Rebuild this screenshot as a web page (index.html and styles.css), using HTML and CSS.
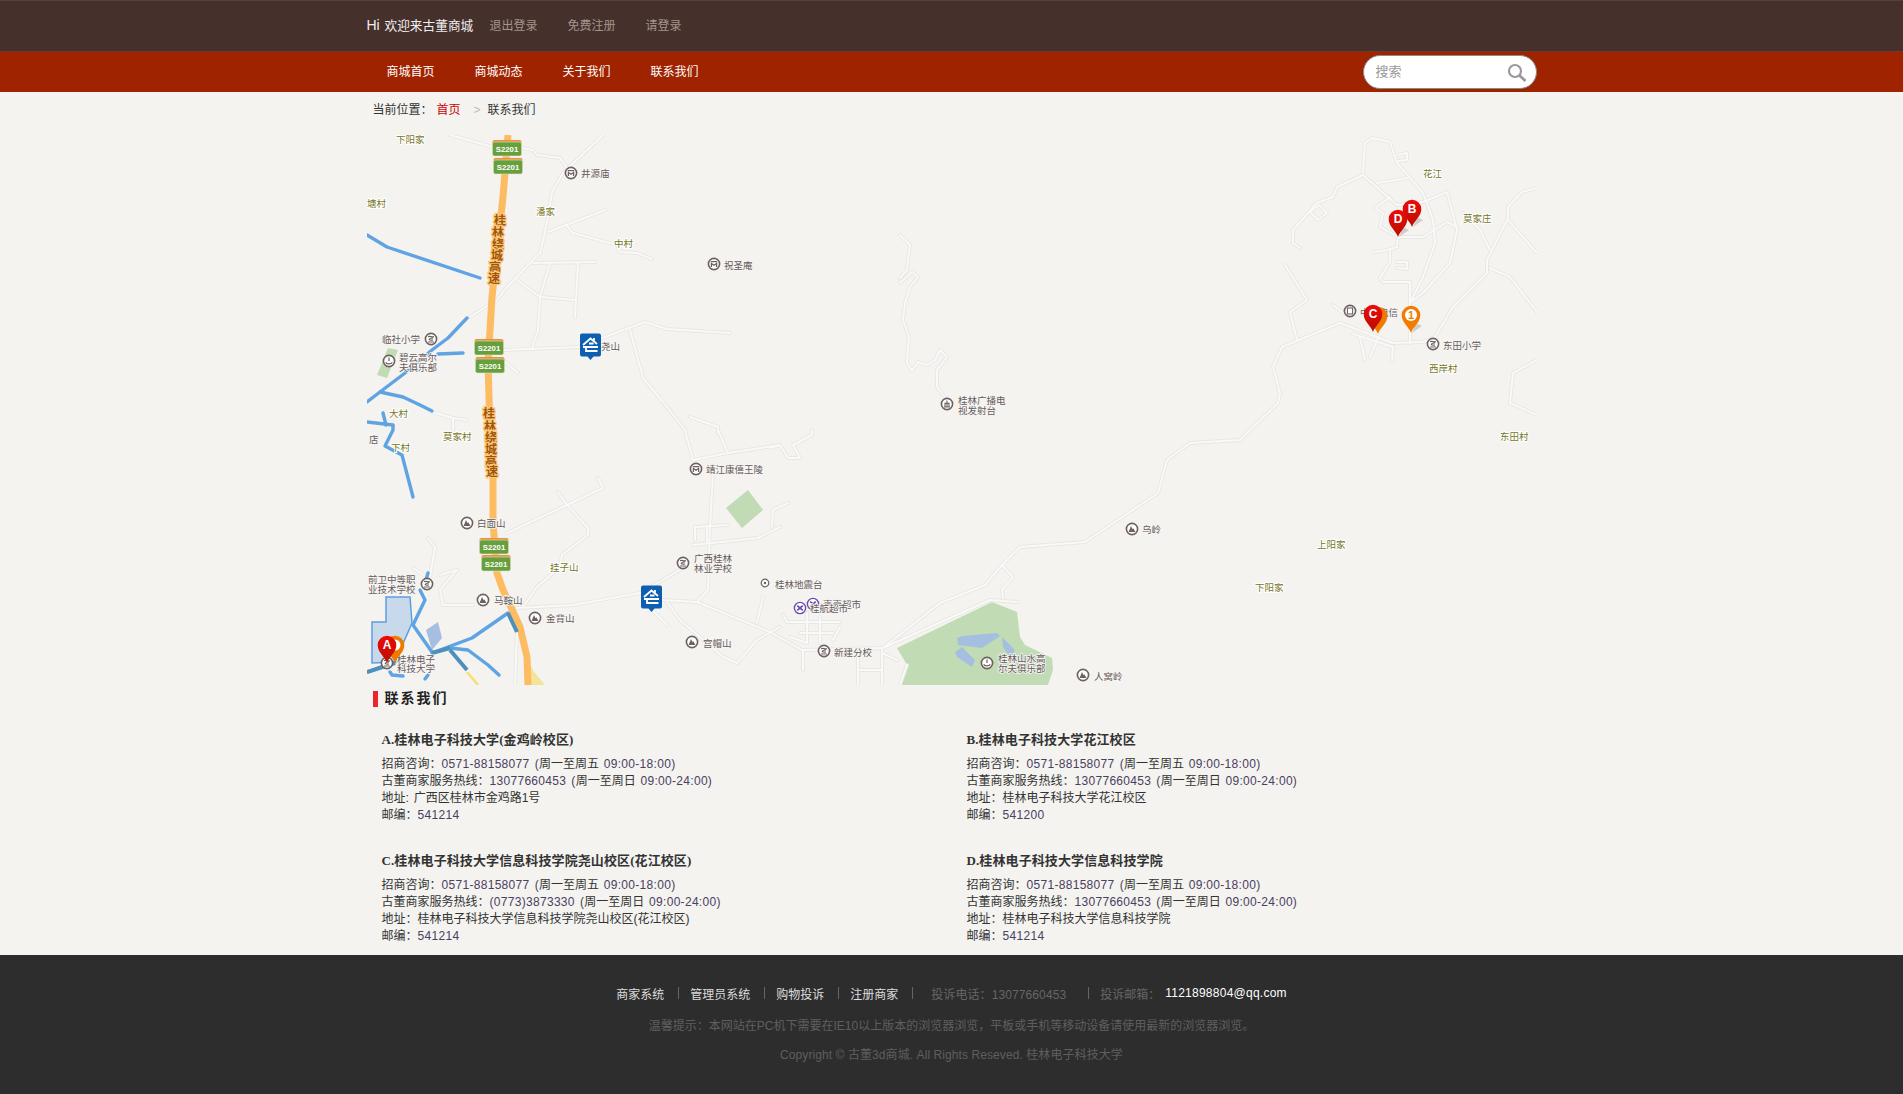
FILE: index.html
```html
<!DOCTYPE html>
<html lang="zh-CN">
<head>
    <meta charset="UTF-8">
    <title>联系我们 - 古董商城</title>
    <link rel="stylesheet" href="styles.css">
</head>
<body>

<div class="top-bar">
    <div class="wrap top-inner">
        <span class="hi">Hi</span>
        <span class="welcome">欢迎来古董商城</span>
        <a class="logout">退出登录</a>
        <a class="reg">免费注册</a>
        <a class="login">请登录</a>
    </div>
</div>

<div class="nav-bar">
    <div class="wrap nav-inner">
        <a>商城首页</a>
        <a>商城动态</a>
        <a>关于我们</a>
        <a>联系我们</a>
        <div class="search">
            <span class="search-text">搜索</span>
            <svg class="search-icon" width="20" height="20" viewBox="0 0 20 20">
                <circle cx="8" cy="8" r="6" fill="none" stroke="#9a9a9a" stroke-width="2.2"/>
                <path d="M12.5 12.5L18.5 18" stroke="#9a9a9a" stroke-width="2.8"/>
            </svg>
        </div>
    </div>
</div>

<div class="wrap crumb">
    <span>当前位置：</span><a class="crumb-home">首页</a><span class="crumb-sep">&gt;</span><span>联系我们</span>
</div>

<div class="wrap">
<svg class="map" viewBox="367 135 1170 550" width="1170" height="550">
    <defs>
        <g id="roads">
            <polyline points="450,135 493,147"/>
            <polyline points="523,148 533,150 537,155 560,158 567,168"/>
            <polyline points="603,135 563,173 552,192 547,223 540,253 530,263 507,287 497,300 470,317"/>
            <polyline points="548,232 605,210"/>
            <polyline points="567,226 573,233 617,245 620,252 637,253 652,259"/>
            <polyline points="533,263 595,262"/>
            <polyline points="517,280 540,297 575,300"/>
            <polyline points="550,263 540,297 538,330 532,348"/>
            <polyline points="578,263 575,317"/>
            <polyline points="503,350 580,347"/>
            <polyline points="602,338 645,322 667,329 730,333"/>
            <polyline points="630,330 643,378 663,402 685,430 693,460"/>
            <polyline points="718,430 728,453 693,460"/>
            <polyline points="728,453 780,445"/>
            <polyline points="713,473 710,527 708,590 697,602"/>
            <polyline points="695,540 695,527 727,525"/>
            <polyline points="707,527 707,542"/>
            <polyline points="693,545 758,538 780,527"/>
            <polyline points="690,417 718,427 718,433"/>
            <polyline points="503,360 518,373"/>
            <polyline points="432,412 453,418 467,420"/>
            <polyline points="453,418 453,430"/>
            <polyline points="507,533 567,505 603,488 598,478"/>
            <polyline points="558,492 567,505 588,528 588,535 562,555 560,567 537,587 523,607"/>
            <polyline points="517,608 573,605 640,593 680,570"/>
            <polyline points="662,600 697,602 770,632 802,650 883,648"/>
            <polyline points="667,602 680,620 723,657 737,663 757,640 780,627"/>
            <polyline points="652,610 667,625"/>
            <polyline points="757,623 763,597"/>
            <polyline points="428,538 435,547 430,577"/>
            <polyline points="413,568 427,577"/>
            <polyline points="440,575 457,570 440,590 443,605 473,605"/>
            <polyline points="517,630 515,685"/>
            <polyline points="883,648 940,603 985,585 1002,565 1020,547 1085,542 1158,493 1167,460 1190,443 1240,440 1278,403 1280,393 1273,367 1282,347 1340,323 1393,343 1423,342"/>
            <polyline points="1423,342 1435,337 1453,307 1487,273 1487,260 1508,218 1508,207 1522,192 1537,188"/>
            <polyline points="1490,268 1510,277 1537,312"/>
            <polyline points="1508,220 1537,253"/>
            <polyline points="1463,213 1480,230 1490,250"/>
            <polyline points="1537,360 1513,373 1510,403 1537,415"/>
            <polyline points="1363,173 1365,143 1372,138 1390,142 1397,163 1423,193 1433,220 1435,243 1423,277 1410,303"/>
            <polyline points="1363,175 1337,187 1333,197 1317,203 1293,230 1293,243 1300,248"/>
            <polyline points="1363,175 1397,205"/>
            <polyline points="1377,183 1407,178"/>
            <polyline points="1397,205 1423,202 1447,192 1457,230 1450,263 1423,293 1410,303"/>
            <polyline points="1390,197 1375,208 1383,213 1380,227 1398,237 1423,237 1447,222 1457,227"/>
            <polyline points="1398,237 1397,247 1387,250 1375,252"/>
            <polyline points="1390,250 1390,262 1380,278 1383,282 1410,282 1410,343"/>
            <polyline points="1397,262 1407,262 1407,269 1397,268"/>
            <polyline points="1397,155 1407,153 1407,160 1398,161"/>
            <polyline points="1310,212 1319,205 1327,213 1318,220 1310,212"/>
            <polyline points="1285,265 1307,300 1290,312 1297,340"/>
            <polyline points="1333,305 1343,313"/>
            <polyline points="1353,334 1393,347"/>
            <polyline points="1360,338 1365,360"/>
            <polyline points="1378,338 1370,357"/>
            <polyline points="1393,347 1392,360"/>
            <polyline points="900,235 910,245 907,270 900,278"/>
            <polyline points="900,283 912,272 918,277 910,287 905,303 903,320 909,337 907,363 912,371 918,362 927,365 935,360 940,350 947,357 937,370 937,387 947,400"/>
            <polyline points="812,430 812,435 793,445 800,458 788,458 780,445 770,448"/>
            <polyline points="788,503 773,510 772,527"/>
            <polyline points="783,615 787,622 840,622"/>
            <polyline points="790,637 807,643"/>
            <polyline points="807,613 807,643"/>
            <polyline points="820,617 820,643"/>
            <polyline points="800,633 833,633"/>
            <polyline points="840,627 833,640"/>
            <polyline points="803,650 803,670"/>
            <polyline points="858,653 858,685"/>
            <polyline points="882,650 882,685"/>
            <polyline points="858,670 882,670"/>
            <polyline points="882,653 897,660"/>
            <polyline points="907,665 900,685"/>
            <polyline points="883,648 990,600 1017,602"/>
            <polyline points="1002,565 1013,577 1002,590 1003,598"/>
        </g>
        <g id="ring"><circle r="5.6" fill="#fff" stroke="#6d6060" stroke-width="1.6"/></g>
        <g id="poi-mountain"><use href="#ring"/><path d="M-3.4 3L-1 -3L.6 .2L1.4 -.8L3.4 3Z" fill="#6d6060"/></g>
        <g id="poi-temple"><use href="#ring"/><path d="M-3.200 -2.400H3.200M-2.600 3V-.6L0 1.200L2.600 -.6V3" fill="none" stroke="#6d6060" stroke-width="1.300"/></g>
        <g id="poi-school"><use href="#ring"/><path d="M-3 -2.400C-1 -3.400 1 -1.400 3 -2.400M2 -1C-3 -.6 -3 1.600 2 1M-3 3H3" fill="none" stroke="#6d6060" stroke-width="1.200"/></g>
        <g id="poi-golf"><use href="#ring"/><path d="M0 -3.4V0M-3 1.2C-3 3.4 3 3.4 3 1.2" fill="none" stroke="#6d6060" stroke-width="1.2"/></g>
        <g id="poi-tower"><use href="#ring"/><path d="M-3 3H3M-2 3V-.6H2V3M0 -3.4V3" fill="none" stroke="#6d6060" stroke-width="1.1"/></g>
        <g id="poi-phone"><use href="#ring"/><rect x="-2.6" y="-3" width="5.2" height="6" fill="none" stroke="#6d6060" stroke-width="1.1"/></g>
        <g id="poi-dot"><circle r="3.8" fill="#fff" stroke="#6d6060" stroke-width="1.2"/><circle r="1.2" fill="#6d6060"/></g>
        <g id="poi-shop"><circle r="5.6" fill="#fff" stroke="#6a4bb0" stroke-width="1.4"/><path d="M-2.8 -2.4L2.8 2.4M2.8 -2.4L-2.8 2.4" stroke="#6a4bb0" stroke-width="1.8"/></g>
        <g id="house-pin">
            <path d="M-10.5 -11a2 2 0 0 1 2 -2H8.5a2 2 0 0 1 2 2V8a2 2 0 0 1 -2 2H3L0 13.5L-3 10H-8.5a2 2 0 0 1 -2 -2Z" fill="#0f5fb0" transform="translate(0 1.500)"/>
            <path d="M-7.500 0L0 -6.500L6.500 -1M3.500 -7V-4M-1.500 -1.500H3M-7.500 2H7.500M-4.500 2V6H7" fill="none" stroke="#fff" stroke-width="1.800"/>
        </g>
        <linearGradient id="redPin" x1="0" y1="0" x2="0" y2="1">
            <stop offset="0" stop-color="#ee0a0a"/>
            <stop offset="1" stop-color="#b80f00"/>
        </linearGradient>
        <path id="pin-shape" d="M0 18C-1.800 12 -9.300 7.500 -9.300 0A9.300 9.300 0 1 1 9.300 0C9.300 7.500 1.800 12 0 18Z"/>
        <g id="shield">
            <rect x="-14.500" y="-8" width="29" height="16" rx="2" fill="#e8913c"/>
            <rect x="-14.500" y="-6" width="29" height="14" rx="2" fill="#689f3d" stroke="#dfe6d0" stroke-width=".6"/>
        </g>
    </defs>

    <!-- land -->
    <path class="green" d="M388 348L398 350L387 378L377 375Z"/>
    <path class="green" d="M748 490L763 510L742 528L726 508Z"/>
    <path class="green" d="M897 648L992 602L1017 612L1020 637L1025 645L1052 658L1053 670L1048 685H902L907 665Z"/>
    <path class="lake" d="M957 638L962 636L997 633L1000 636L982 648L958 645Z"/>
    <path class="lake" d="M1002 637L1015 650L1010 657L1003 647Z"/>
    <path class="lake" d="M955 652L962 647L975 660L972 667L957 657Z"/>
    <path class="lake" d="M438 622L426 630L432 650L442 638Z"/>
    <path class="campus" d="M386 597H410L412 623L395 662L372 663V622H386Z"/>

    <!-- ordinary roads -->
    <use href="#roads" class="road-edge"/>
    <use href="#roads" class="road-fill"/>

    <!-- blue roads -->
    <g class="blue">
        <polyline points="367,235 387,247 480,278"/>
        <polyline points="467,318 448,338 432,350 405,373 380,392 367,402"/>
        <polyline points="438,354 463,353"/>
        <polyline points="380,392 403,397 420,405 432,411"/>
        <polyline points="367,422 393,425"/>
        <polyline points="383,413 386,425"/>
        <polyline points="393,426 393,430 385,446 402,455 413,497"/>
        <polyline points="367,672 395,662"/>
        <polyline points="432,653 472,638 508,613"/>
        <polyline points="432,652 413,625 425,600 420,590"/>
        <polyline points="426,580 428,573"/>
        <polyline points="450,648 468,650 488,665 499,675"/>
        <polyline points="390,672 392,675 403,676"/>
        <polyline points="428,675 425,679"/>
    </g>
    <polyline class="yellow" points="467,672 478,685"/>
    <polyline class="yellow" points="530,667 538,685"/>
    <path class="yellow-fill" d="M530 667L545 685H531Z"/>

    <!-- expressway -->
    <polyline class="highway" points="508,135 503,197 492,297 488,363 490,430 493,480 493,523 497,573 503,590 520,627 527,657 528,685"/>
    <polyline class="blue-dark" points="508,613 517,632"/>
    <polyline class="blue-dark" points="450,650 467,670"/>
    <polyline class="blue-dark" points="367,672 395,663"/>
    <polyline class="blue-dark" points="432,653 450,648"/>

    <g class="hw-text">
        <text x="500" y="221">桂</text><text x="498" y="233">林</text><text x="498" y="245">绕</text>
        <text x="497" y="256">城</text><text x="495" y="268">高</text><text x="494" y="279">速</text>
        <text x="489" y="414">桂</text><text x="490" y="427">林</text><text x="491" y="438">绕</text>
        <text x="491" y="450">城</text><text x="491" y="462">高</text><text x="492" y="472">速</text>
    </g>

    <g class="shields">
        <use href="#shield" x="507" y="148"/><text x="507" y="149">S2201</text>
        <use href="#shield" x="508" y="166"/><text x="508" y="167">S2201</text>
        <use href="#shield" x="489" y="347"/><text x="489" y="348">S2201</text>
        <use href="#shield" x="490" y="365"/><text x="490" y="366">S2201</text>
        <use href="#shield" x="494" y="546"/><text x="494" y="547">S2201</text>
        <use href="#shield" x="496" y="563"/><text x="496" y="564">S2201</text>
    </g>

    <!-- village names -->
    <g class="village">
        <text x="396" y="139">下阳家</text>
        <text x="367" y="203">塘村</text>
        <text x="536" y="211">潘家</text>
        <text x="614" y="243">中村</text>
        <text x="389" y="413">大村</text>
        <text x="443" y="436">莫家村</text>
        <text x="391" y="447">下村</text>
        <text x="550" y="567">挂子山</text>
        <text x="1423" y="173">花江</text>
        <text x="1463" y="218">莫家庄</text>
        <text x="1429" y="368">西岸村</text>
        <text x="1500" y="436">东田村</text>
        <text x="1317" y="544">上阳家</text>
        <text x="1255" y="587">下阳家</text>
    </g>

    <!-- poi -->
    <use href="#poi-temple" x="571" y="173"/>
    <use href="#poi-temple" x="714" y="264"/>
    <use href="#poi-school" x="431" y="339"/>
    <use href="#poi-golf" x="389" y="361"/>
    <use href="#poi-temple" x="696" y="469"/>
    <use href="#poi-mountain" x="467" y="523"/>
    <use href="#poi-school" x="683" y="563"/>
    <use href="#poi-school" x="427" y="584"/>
    <use href="#poi-dot" x="765" y="583"/>
    <use href="#poi-mountain" x="483" y="600"/>
    <use href="#poi-mountain" x="535" y="618"/>
    <use href="#poi-mountain" x="692" y="642"/>
    <use href="#poi-school" x="387" y="663"/>
    <use href="#poi-shop" x="813" y="604"/>
    <use href="#poi-shop" x="800" y="608"/>
    <use href="#poi-school" x="824" y="651"/>
    <use href="#poi-golf" x="987" y="663"/>
    <use href="#poi-mountain" x="1083" y="675"/>
    <use href="#poi-mountain" x="1132" y="529"/>
    <use href="#poi-tower" x="947" y="404"/>
    <use href="#poi-school" x="1433" y="344"/>
    <use href="#poi-phone" x="1350" y="311"/>

    <g class="poi-text">
        <text x="581" y="173">井源庙</text>
        <text x="724" y="265">祝圣庵</text>
        <text x="382" y="339">临社小学</text>
        <text x="399" y="357">碧云高尔</text>
        <text x="399" y="367">夫俱乐部</text>
        <text x="601" y="346">尧山</text>
        <text x="369" y="439">店</text>
        <text x="706" y="469">靖江康僖王陵</text>
        <text x="477" y="523">白面山</text>
        <text x="694" y="558">广西桂林</text>
        <text x="694" y="568">林业学校</text>
        <text x="368" y="579">前卫中等职</text>
        <text x="368" y="589">业技术学校</text>
        <text x="775" y="584">桂林地震台</text>
        <text x="494" y="600">马鞍山</text>
        <text x="546" y="618">金背山</text>
        <text x="703" y="643">宫帽山</text>
        <text x="397" y="659">桂林电子</text>
        <text x="397" y="668">科技大学</text>
        <text x="823" y="604">壹壹超市</text>
        <text x="810" y="608">桂航超市</text>
        <text x="834" y="652">新建分校</text>
        <text x="998" y="658">桂林山水高</text>
        <text x="998" y="668">尔夫俱乐部</text>
        <text x="1094" y="676">人窝岭</text>
        <text x="1142" y="529">乌岭</text>
        <text x="958" y="400">桂林广播电</text>
        <text x="958" y="410">视发射台</text>
        <text x="1443" y="345">东田小学</text>
        <text x="1360" y="312">中国电信</text>
    </g>

    <!-- markers -->
    <use href="#house-pin" x="590.500" y="345"/>
    <use href="#house-pin" x="651.500" y="597"/>

    <g transform="translate(395 645)">
        <use href="#pin-shape" fill="#f07a00"/><circle r="5.500" fill="#fff"/>
    </g>
    <g transform="translate(387 645)">
        <use href="#pin-shape" fill="url(#redPin)"/><text class="pin-letter" y="0">A</text>
    </g>
    <g transform="translate(1412 209)">
        <path d="M1 18L11 11L5 8Z" fill="#cfcdc9"/>
        <use href="#pin-shape" fill="url(#redPin)"/><text class="pin-letter" y="0">B</text>
    </g>
    <g transform="translate(1398 219)">
        <path d="M1 18L11 11L5 8Z" fill="#cfcdc9"/>
        <use href="#pin-shape" fill="url(#redPin)"/><text class="pin-letter" y="0">D</text>
    </g>
    <g transform="translate(1378 316)">
        <use href="#pin-shape" fill="#f07a00"/>
    </g>
    <g transform="translate(1373 314)">
        <use href="#pin-shape" fill="url(#redPin)"/><text class="pin-letter" y="0">C</text>
    </g>
    <g transform="translate(1411 315)">
        <path d="M1 18L11 11L5 8Z" fill="#cfcdc9"/>
        <use href="#pin-shape" fill="#f27c00"/><circle r="6" fill="#fff"/><text class="pin-num" y="0">1</text>
    </g>
</svg>
</div>

<div class="wrap">
    <h2 class="section-title">联系我们</h2>
    <div class="contact-grid">
        <div class="contact">
            <h3>A.桂林电子科技大学(金鸡岭校区)</h3>
            <p>招商咨询：<span class="num">0571-88158077 (</span>周一至周五 <span class="num">09:00-18:00)</span></p>
            <p>古董商家服务热线：<span class="num">13077660453 (</span>周一至周日 <span class="num">09:00-24:00)</span></p>
            <p>地址: 广西区桂林市金鸡路1号</p>
            <p>邮编：<span class="num">541214</span></p>
        </div>
        <div class="contact">
            <h3>B.桂林电子科技大学花江校区</h3>
            <p>招商咨询：<span class="num">0571-88158077 (</span>周一至周五 <span class="num">09:00-18:00)</span></p>
            <p>古董商家服务热线：<span class="num">13077660453 (</span>周一至周日 <span class="num">09:00-24:00)</span></p>
            <p>地址：桂林电子科技大学花江校区</p>
            <p>邮编：<span class="num">541200</span></p>
        </div>
        <div class="contact">
            <h3>C.桂林电子科技大学信息科技学院尧山校区(花江校区)</h3>
            <p>招商咨询：<span class="num">0571-88158077 (</span>周一至周五 <span class="num">09:00-18:00)</span></p>
            <p>古董商家服务热线：<span class="num">(0773)3873330 (</span>周一至周日 <span class="num">09:00-24:00)</span></p>
            <p>地址：桂林电子科技大学信息科技学院尧山校区(花江校区)</p>
            <p>邮编：<span class="num">541214</span></p>
        </div>
        <div class="contact">
            <h3>D.桂林电子科技大学信息科技学院</h3>
            <p>招商咨询：<span class="num">0571-88158077 (</span>周一至周五 <span class="num">09:00-18:00)</span></p>
            <p>古董商家服务热线：<span class="num">13077660453 (</span>周一至周日 <span class="num">09:00-24:00)</span></p>
            <p>地址：桂林电子科技大学信息科技学院</p>
            <p>邮编：<span class="num">541214</span></p>
        </div>
    </div>
</div>

<div class="footer">
    <div class="foot-links">
        <a>商家系统</a><i></i><a>管理员系统</a><i></i><a>购物投诉</a><i></i><a>注册商家</a><i class="wide"></i>
        <span class="foot-tel">投诉电话：13077660453</span><i></i>
        <span>投诉邮箱：</span><a class="foot-mail">1121898804@qq.com</a>
    </div>
    <p class="foot-tip">温馨提示：本网站在PC机下需要在IE10以上版本的浏览器浏览，平板或手机等移动设备请使用最新的浏览器浏览。</p>
    <p class="foot-copy">Copyright © 古董3d商城. All Rights Reseved. 桂林电子科技大学</p>
</div>

</body>
</html>
```

FILE: styles.css
```css
* { box-sizing: border-box; }
html, body { height: 1094px; overflow: hidden; }
body {
    margin: 0;
    background: #f4f3f0;
    color: #333;
    font-family: "Liberation Sans", "Noto Sans CJK SC", sans-serif;
    font-size: 12px;
}
.wrap { width: 1170px; margin: 0 auto; }

.top-bar {
    height: 52px;
    background: #46302b;
    border-top: 1px solid #574039;
    border-bottom: 1px solid #6f3a2c;
}
.top-inner { display: flex; align-items: center; height: 47px; color: #a3948e; }
.hi { font-size: 14px; color: #eee; width: 18px; margin-top: 1px; }
.welcome { font-size: 12.700px; color: #eee; width: 105px; }
.reg { margin-left: 30px; }
.login { margin-left: 30px; }

.nav-bar { height: 40px; background: #a02300; }
.nav-inner { display: flex; align-items: center; height: 40px; color: #fff; }
.nav-inner a { padding: 0 20px; margin-top: -4px; }
.search {
    position: relative;
    margin-left: auto;
    width: 174px;
    height: 34px;
    background: #fff;
    border: 1px solid #8a8a8a;
    border-radius: 17px;
    padding-left: 12px;
    line-height: 32px;
    font-size: 13px;
    color: #999;
}
.search-icon { position: absolute; right: 9px; top: 7px; }

.crumb { height: 43px; line-height: 36px; padding-left: 6px; }
.crumb-home { color: #c00; margin-left: 4px; }
.crumb-sep { color: #b8bec4; margin: 0 7px 0 13px; }

.map { display: block; }
.map polyline { fill: none; }
.road-edge, .road-fill { fill: none; }
.green { fill: #c1dbb5; }
.lake { fill: #a6bfe0; }
.campus { fill: #c9d9ec; stroke: #5c9fe0; stroke-width: 1.500; }
.road-edge { stroke: #e8e7e4; stroke-width: 3.800; stroke-linejoin: round; stroke-linecap: round; }
.road-fill { stroke: #f9f9f8; stroke-width: 2; stroke-linejoin: round; stroke-linecap: round; }
.blue polyline { stroke: #5fa3e3; stroke-width: 3.400; stroke-linejoin: round; stroke-linecap: round; }
.map .blue-dark { stroke: #4e90bd; stroke-width: 4; }
.map .yellow { stroke: #f6e26a; stroke-width: 2.500; }
.yellow-fill { fill: #f2e49a; }
.map .highway { stroke: #fdbb62; stroke-width: 7; stroke-linejoin: round; }

.map text { dominant-baseline: central; }
.hw-text text {
    font-size: 12px;
    font-weight: bold;
    fill: #a0560c;
    text-anchor: middle;
    stroke: #fdc878;
    stroke-width: 2.500;
    paint-order: stroke;
}
.shields text {
    font-family: "Liberation Sans", sans-serif;
    font-size: 7.800px;
    font-weight: bold;
    fill: #fff;
    text-anchor: middle;
}
.village text {
    font-size: 9.500px;
    fill: #77761f;
    stroke: #fff;
    stroke-width: 2;
    paint-order: stroke;
}
.poi-text text {
    font-size: 9.500px;
    fill: #665a5a;
    stroke: #f7f6f4;
    stroke-width: 1.500;
    paint-order: stroke;
}
.pin-letter {
    font-size: 12px;
    font-weight: bold;
    fill: #fff;
    text-anchor: middle;
}
.pin-num {
    font-size: 11px;
    font-weight: bold;
    fill: #f27c00;
    text-anchor: middle;
}

.section-title {
    margin: 6px 0 0 6px;
    height: 16px;
    line-height: 14px;
    padding-left: 7px;
    border-left: 5px solid #e8262b;
    font-size: 14px;
    letter-spacing: 2px;
    color: #222;
}
.contact-grid {
    display: grid;
    grid-template-columns: 585px 585px;
    row-gap: 27px;
    padding-top: 23px;
    padding-bottom: 10px;
}
.contact { padding-left: 15px; }
.contact h3 {
    margin: 0 0 6px;
    height: 20px;
    font-family: "Liberation Serif", "Noto Sans CJK SC", serif;
    font-size: 13px;
    line-height: 20px;
    letter-spacing: .1px;
    color: #333;
}
.contact p { margin: 0; height: 17px; line-height: 17px; word-spacing: 1.500px; }
.num { color: #4a4060; letter-spacing: .3px; }

.footer {
    height: 139px;
    background: #2d2d2d;
    text-align: center;
    color: #666;
    padding-top: 29px;
}
.foot-links { display: flex; justify-content: center; align-items: center; height: 18px; }
.foot-links a { color: #ddd; }
.foot-links i { width: 1px; height: 12px; background: #666; margin: 0 11px 0 14px; }
.foot-links i.wide { margin-right: 18px; }
.foot-tel { margin-right: 8px; letter-spacing: .1px; }
.foot-links .foot-mail { color: #fff; margin-left: 5px; letter-spacing: .25px; }
.foot-tip { margin: 15px 0 0; line-height: 18px; color: #5f5f5f; }
.foot-copy { margin: 11px 0 0; line-height: 18px; color: #5f5f5f; letter-spacing: .08px; }
```
